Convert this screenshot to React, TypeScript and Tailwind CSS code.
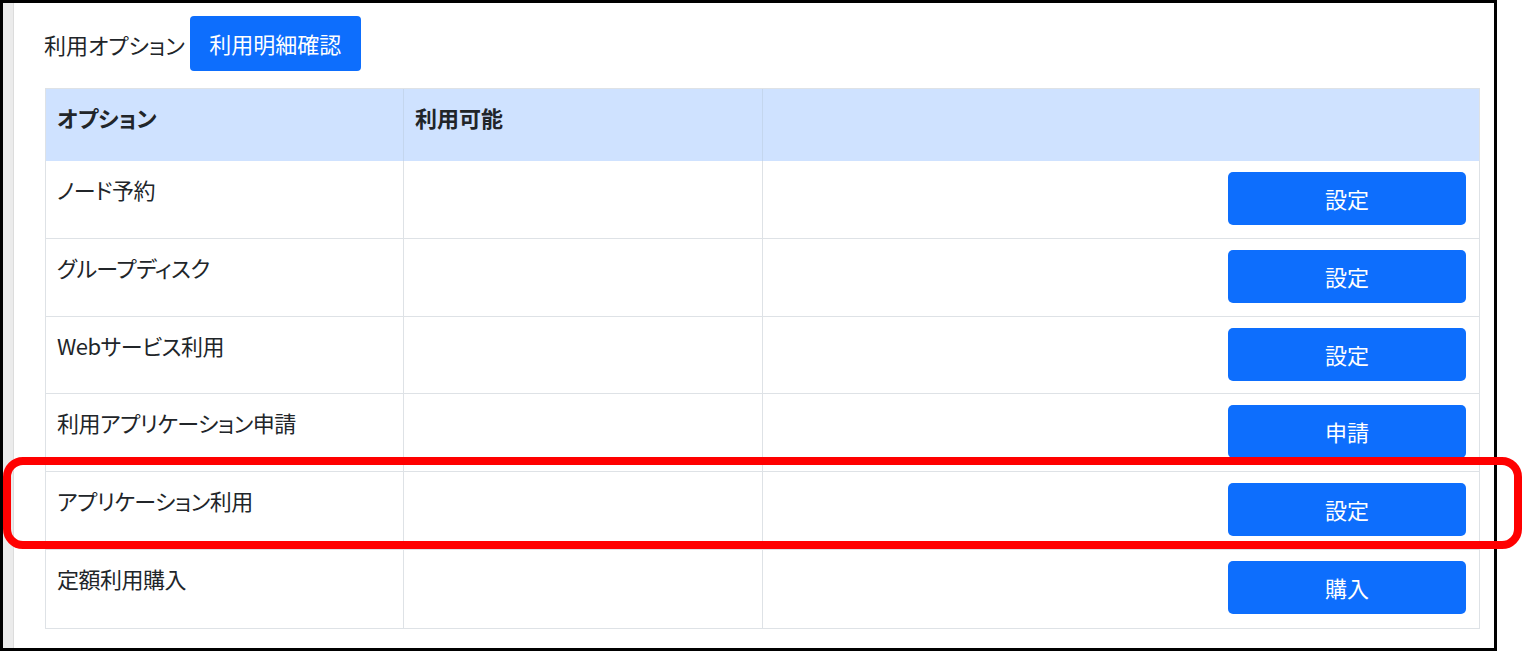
import React from 'react';

type OptionRow = {
  name: string;
  action: string;
  h: string;
};

const rows: OptionRow[] = [
  { name: 'ノード予約', action: '設定', h: 'h-[78px]' },
  { name: 'グループディスク', action: '設定', h: 'h-[78px]' },
  { name: 'Webサービス利用', action: '設定', h: 'h-[77px]' },
  { name: '利用アプリケーション申請', action: '申請', h: 'h-[78px]' },
  { name: 'アプリケーション利用', action: '設定', h: 'h-[78px]' },
  { name: '定額利用購入', action: '購入', h: 'h-[78px]' },
];

const font = "font-['Meiryo_UI','Noto_Sans_CJK_JP',sans-serif] [font-feature-settings:'palt']";

export default function App() {
  return (
    <div className={`relative h-[651px] w-[1522px] overflow-hidden bg-white text-[#212529] ${font}`}>
      <div className="flex h-[651px] w-[1497px] border-[3px] border-black">
        <div className="w-[11px] shrink-0 border-r border-[#dcdcdc] bg-[#ebebeb]" />
        <div className="flex-1 pl-[30px] pr-[14px] pt-[13px]">
          <div className="flex items-center gap-[5px]">
            <span className="text-[22px] leading-none">利用オプション</span>
            <button className="h-[55px] w-[171px] rounded-[4px] bg-[#0d6efd] text-[22px] text-white">
              利用明細確認
            </button>
          </div>

          <div className="ml-px mt-[17px] w-[1435px] border border-[#dee2e6]">
            <div className="grid h-[72px] grid-cols-[358px_359px_1fr] bg-[#cfe2ff] text-[22px] font-bold">
              <div className="border-r border-[#c4d6ee] pl-[11px] pt-[12px] leading-[1.5]">オプション</div>
              <div className="border-r border-[#c4d6ee] pl-[11px] pt-[12px] leading-[1.5]">利用可能</div>
              <div />
            </div>
            {rows.map((row, i) => (
              <div
                key={row.name}
                className={`grid grid-cols-[358px_359px_1fr] text-[22px] ${row.h} ${
                  i < rows.length - 1 ? 'border-b border-[#dee2e6]' : ''
                }`}
              >
                <div className="border-r border-[#dee2e6] pl-[11px] pt-[12px] leading-[1.5] tracking-[-0.5px]">
                  {row.name}
                </div>
                <div className="border-r border-[#dee2e6]" />
                <div className="flex justify-end pr-[13px] pt-[11px]">
                  <button className="h-[53px] w-[238px] rounded-[5px] bg-[#0d6efd] text-[22px] text-white">
                    {row.action}
                  </button>
                </div>
              </div>
            ))}
          </div>
        </div>
      </div>

      {/* highlight around the アプリケーション利用 row */}
      <div className="pointer-events-none absolute left-[3px] top-[457px] h-[92px] w-[1519px] rounded-[20px] border-[8px] border-[#ff0000]" />
    </div>
  );
}
